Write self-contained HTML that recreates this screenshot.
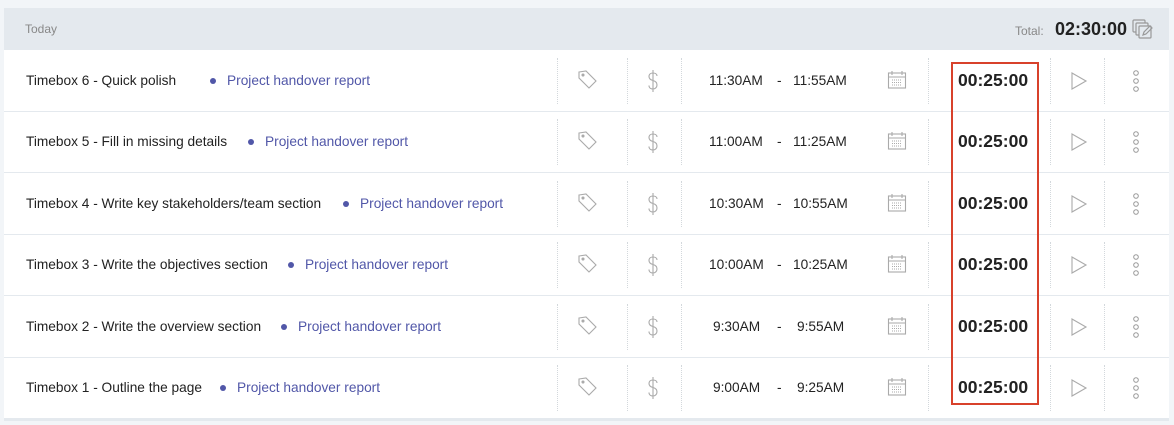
<!DOCTYPE html>
<html><head><meta charset="utf-8"><style>
*{margin:0;padding:0;box-sizing:border-box}
body{width:1174px;height:425px;background:#f2f5f8;font-family:"Liberation Sans",Arial,sans-serif;position:relative;overflow:hidden}
.wrap{position:absolute;left:4px;top:8px;width:1165px;height:413px;background:#fff;border-bottom:3px solid #e4e9ee}
.hdr{position:absolute;left:0;top:0;width:100%;height:42px;background:#e4e9ee}
.row{position:absolute;left:0;width:100%;height:62px;border-bottom:1px solid #e4e9ee}
.t{position:absolute;top:0;line-height:61px;font-size:13.7px;color:#222;white-space:nowrap}
.p{color:#5157a8}
.dot{position:absolute;top:28px;width:6px;height:6px;border-radius:50%;background:#5157a8}
.dv{position:absolute;top:8px;height:46px;border-left:1px dotted #d3d8dc}
.d{font-size:17.5px;font-weight:bold;color:#222}
svg{position:absolute}
.red{position:absolute;left:951px;top:62px;width:88px;height:343px;border:2px solid #d8412b}
</style></head><body>
<div class="wrap">
<div class="hdr">
<div style="position:absolute;left:21px;top:14px;font-size:12px;color:#888">Today</div>
<div style="position:absolute;left:1011px;top:16px;font-size:12px;color:#888">Total:</div>
<div style="position:absolute;left:1051px;top:11px;font-size:18px;font-weight:bold;color:#222">02:30:00</div>
<svg style="left:1128px;top:11px" width="22" height="21" viewBox="0 0 22 21" fill="none" stroke="#999" stroke-width="1.2"><rect x="1" y="1" width="12" height="12" rx="1"/><rect x="4" y="4" width="12" height="12" rx="1" fill="#e4e9ee"/><rect x="7" y="7" width="12" height="12" rx="1" fill="#e4e9ee"/><path d="M11 16l1-3 6-6 2 2-6 6z"/></svg>
</div>
</div>
<div id="rows"></div>
<div class="red"></div>
<script>
var r=[["Timebox 6 - Quick polish",213,"11:30AM","11:55AM"],["Timebox 5 - Fill in missing details",251,"11:00AM","11:25AM"],["Timebox 4 - Write key stakeholders/team section",346,"10:30AM","10:55AM"],["Timebox 3 - Write the objectives section",291,"10:00AM","10:25AM"],["Timebox 2 - Write the overview section",284,"9:30AM","9:55AM"],["Timebox 1 - Outline the page",223,"9:00AM","9:25AM"]];
var h="",tops=[50,111,173,234,296,357];
r.forEach(function(a,i){var y=tops[i];var s9=a[2].length<7;
h+='<div class="row" style="left:4px;width:1165px;top:'+y+'px">'+
'<div class="t" style="left:22px">'+a[0]+'</div>'+
'<div class="dot" style="left:'+(a[1]-7)+'px"></div>'+
'<div class="t p" style="left:'+(a[1]+10)+'px">Project handover report</div>'+
'<div class="dv" style="left:553px"></div><div class="dv" style="left:623px"></div><div class="dv" style="left:677px"></div><div class="dv" style="left:924px"></div><div class="dv" style="left:1046px"></div><div class="dv" style="left:1100px"></div>'+
'<svg style="left:573px;top:19px" width="22" height="22" viewBox="0 0 22 22" fill="none" stroke="#aaa" stroke-width="1.1"><path d="M2 3l7-1 10 10-7 7L2 9z"/><circle cx="6" cy="6" r="1" fill="#aaa"/></svg>'+
'<svg style="left:643px;top:19px" width="12" height="24" viewBox="0 0 12 24" fill="none" stroke="#aaa" stroke-width="1.1"><path d="M6 1v22M10 7c0-2-2-3-4-3S2 5 2 7.5s2 3.5 4 4 4 2 4 4.5-2 4-4 4-4-1-4-3.5"/></svg>'+
'<div class="t" style="left:'+(s9?709:705)+'px">'+a[2]+'</div>'+
'<div class="t" style="left:773px">-</div>'+
'<div class="t" style="left:'+(s9?793:789)+'px">'+a[3]+'</div>'+
'<svg style="left:883px;top:20px" width="20" height="20" viewBox="0 0 20 20" fill="none" stroke="#aaa" stroke-width="1.1"><rect x="1.5" y="3" width="17" height="15"/><path d="M1.5 7h17M5 1v4M15 1v4"/><path d="M5 10h10M5 12.5h10M5 15h10" stroke-dasharray="1 1"/></svg>'+
'<div class="t d" style="left:954px">00:25:00</div>'+
'<svg style="left:1066px;top:22px" width="18" height="18" viewBox="0 0 18 18" fill="none" stroke="#aaa" stroke-width="1.1"><path d="M2 1l14 8-14 8z"/></svg>'+
'<svg style="left:1128px;top:19px" width="8" height="24" viewBox="0 0 8 24" fill="none" stroke="#999" stroke-width="1"><circle cx="4" cy="4" r="2.3"/><circle cx="4" cy="12" r="2.3"/><circle cx="4" cy="20" r="2.3"/></svg>'+
'</div>';});
document.getElementById("rows").innerHTML=h;
</script>
</body></html>
